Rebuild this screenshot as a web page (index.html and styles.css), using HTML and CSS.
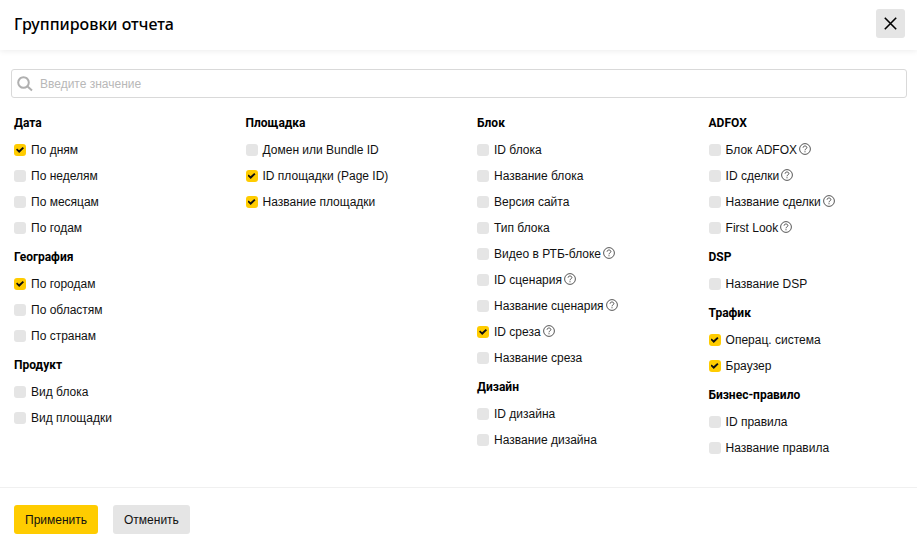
FILE: index.html
```html
<!DOCTYPE html>
<html lang="ru">
<head>
<meta charset="utf-8">
<title>Группировки отчета</title>
<link rel="stylesheet" href="styles.css">
</head>
<body>
<header class="header">
  <h1 class="title">Группировки отчета</h1>
  <button class="close" type="button" aria-label="Закрыть"><svg width="13" height="13" viewBox="0 0 13 13"><path d="M.8.8l11.4 11.4M12.2.8L.8 12.2" stroke="#000" stroke-width="1.6"/></svg></button>
</header>
<main class="content">
  <label class="search">
    <svg width="16" height="16" viewBox="0 0 16 16" fill="none" stroke="#b0b0b0" stroke-width="2"><circle cx="6.5" cy="6.5" r="5.3"/><path d="M10.3 10.3l4.7 4.2"/></svg>
    <input type="text" placeholder="Введите значение" aria-label="Поиск">
  </label>
  <div class="columns" id="columns"></div>
</main>
<footer class="footer">
  <button class="button primary" type="button">Применить</button>
  <button class="button" type="button">Отменить</button>
</footer>
<script src="script.js"></script>
</body>
</html>
```
FILE: styles.css
```css
* { box-sizing: border-box; }
body { margin: 0; min-height: 100vh; display: flex; flex-direction: column; background: #fff; color: #111; font: 12px/16px "Liberation Sans", Arial, sans-serif; }
.header { display: flex; align-items: center; justify-content: space-between; height: 50px; padding: 0 12px 3px 14px; box-shadow: 0 1px 6px rgba(0,0,0,.08); }
.title { margin: 0; font: 500 16px/20px "Noto Sans", sans-serif; color: #000; }
.close { display: flex; align-items: center; justify-content: center; width: 29px; height: 29px; padding: 0; border: 0; border-radius: 3px; background: #e5e5e5; }
.content { flex: 1; padding: 19px 10px 0 11px; }
.search { display: flex; align-items: center; gap: 7px; height: 29px; padding: 0 5px; border: 1px solid #d9d9d9; border-radius: 3px; }
.search input { flex: 1; border: 0; padding: 0; outline: 0; font: inherit; background: none; }
.search input::placeholder { color: #b8b8b8; opacity: 1; }
.columns { display: grid; grid-template-columns: 7fr 7fr 7fr 6fr; padding: 17px 0 0 3px; }
.group { margin: 0; padding: 0; border: 0; min-width: 0; }
.group + .group { margin-top: 8px; }
.group-title { padding: 0; font: 700 12px/16px Roboto, sans-serif; color: #000; margin-bottom: 6px; }
.option { display: flex; align-items: center; height: 26px; }
.option input { appearance: none; display: grid; place-items: center; width: 12px; height: 12px; margin: 0 5px 0 0; border-radius: 3px; background: #e5e5e5; }
.option input:checked { background: #fc0; }
.option input:checked::before { content: ""; width: 8px; height: 6px; background: #111; clip-path: polygon(0 46%, 14% 26%, 38% 56%, 84% 0, 100% 22%, 40% 100%); }
.help { margin: 0 0 2px 2px; }
.footer { display: flex; gap: 15px; padding: 17px 14px 15px; border-top: 1px solid #f0f0f0; }
.button { height: 29px; padding: 0 11px; border: 0; border-radius: 3px; background: #e5e5e5; font: inherit; color: #111; }
.primary { background: #fc0; }
```
FILE: script.js
```js
// "+" marks a checked option, "?" marks an option with a help icon
const columns = [
  [['Дата', ['+По дням', 'По неделям', 'По месяцам', 'По годам']], ['География', ['+По городам', 'По областям', 'По странам']], ['Продукт', ['Вид блока', 'Вид площадки']]],
  [['Площадка', ['Домен или Bundle ID', '+ID площадки (Page ID)', '+Название площадки']]],
  [['Блок', ['ID блока', 'Название блока', 'Версия сайта', 'Тип блока', 'Видео в РТБ-блоке?', 'ID сценария?', 'Название сценария?', '+ID среза?', 'Название среза']], ['Дизайн', ['ID дизайна', 'Название дизайна']]],
  [['ADFOX', ['Блок ADFOX?', 'ID сделки?', 'Название сделки?', 'First Look?']], ['DSP', ['Название DSP']], ['Трафик', ['+Операц. система', '+Браузер']], ['Бизнес-правило', ['ID правила', 'Название правила']]]
];
const help = '<svg class="help" width="12" height="12" viewBox="0 0 12 12" fill="none" stroke="#444" stroke-width=".9" aria-hidden="true"><circle cx="6" cy="6" r="5.4"/><path d="M4.1 4.7C4.1 3.5 5 3 6 3s1.9.6 1.9 1.6C7.9 5.8 6 5.8 6 7.3M6 8.2v1.1"/></svg>';
document.getElementById('columns').innerHTML = columns.map(c => '<div>' + c.map(([t, o]) =>
  `<fieldset class="group"><legend class="group-title">${t}</legend>` + o.map(s =>
    `<label class="option"><input type="checkbox"${s[0] === '+' ? ' checked' : ''}>${s.replace(/[+?]/g, '')}${s.endsWith('?') ? help : ''}</label>`).join('') + '</fieldset>').join('') + '</div>').join('');
```
